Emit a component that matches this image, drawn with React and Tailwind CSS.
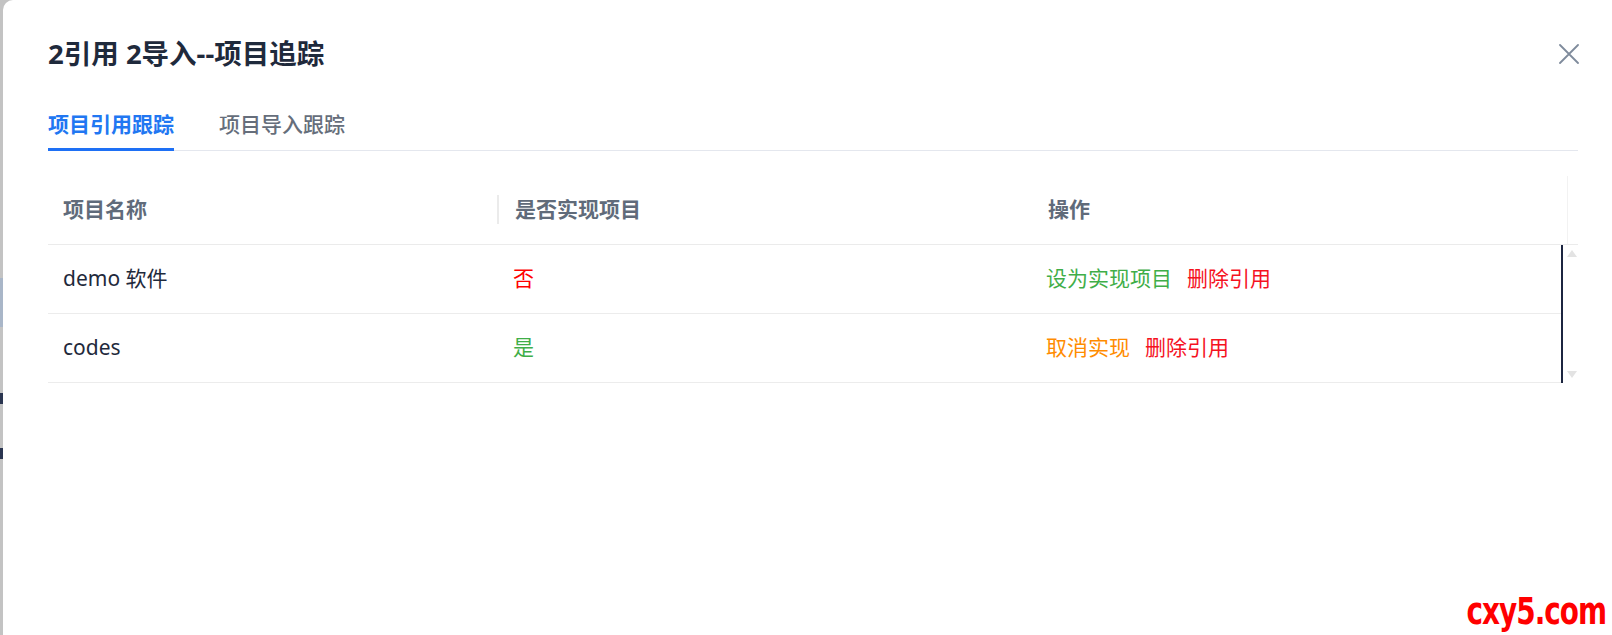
import React from 'react';

const rows = [
  { name: 'demo 软件', done: false },
  { name: 'codes', done: true },
];

const CloseIcon = () => (
  <svg width="20" height="20" viewBox="0 0 20 20" fill="none">
    <path d="M1 1L19 19M19 1L1 19" stroke="#7f8b9c" strokeWidth="1.8" strokeLinecap="round" />
  </svg>
);

const App = () => {
  return (
    <div
      className="flex h-[635px] w-full overflow-hidden bg-[#c3c3c3]"
      style={{ fontFamily: '"Noto Sans", "Noto Sans CJK SC", sans-serif' }}
    >
      {/* page behind the modal, only a sliver shows */}
      <div className="relative w-[3px] shrink-0">
        <div className="absolute left-0 top-[278px] h-[49px] w-[3px] bg-[#a9b6c8]" />
        <div className="absolute left-0 top-[393px] h-[11px] w-[3px] bg-[#2a3550]" />
        <div className="absolute left-0 top-[448px] h-[11px] w-[3px] bg-[#2a3550]" />
      </div>

      {/* modal */}
      <div className="relative flex flex-1 flex-col rounded-tl-[10px] bg-white pl-[45px] pr-[34px]">
        <div className="flex h-[109px] items-center justify-between pb-[1px]">
          <h1 className="text-[27.5px] font-bold text-[#1f2a3c]">2引用 2导入--项目追踪</h1>
          <button className="-mr-[1px] flex h-[20px] w-[20px] items-center justify-center">
            <CloseIcon />
          </button>
        </div>

        {/* tabs */}
        <div className="flex gap-[45px] border-b border-[#e4e7ee]">
          <div className="relative pb-[9px] text-[21px] font-semibold text-[#2177f2]">
            项目引用跟踪
            <div className="absolute bottom-[-1px] left-0 h-[3px] w-full bg-[#1e70f5]" />
          </div>
          <div className="pb-[9px] text-[21px] font-medium text-[#666e7b]">项目导入跟踪</div>
        </div>

        {/* table */}
        <div className="mt-[25px]">
          <div className="grid h-[69px] grid-cols-[451px_533px_1fr_11px] border-b border-[#ebebeb] text-[21px] font-semibold text-[#606b7a]">
            <div className="relative flex items-center pl-[15px]">
              项目名称
              <div className="absolute right-0 top-[19px] h-[29px] w-[2px] bg-[#ebebeb]" />
            </div>
            <div className="flex items-center pl-[16px]">是否实现项目</div>
            <div className="flex items-center pl-[16px]">操作</div>
            <div className="border-l border-[#f2f2f2]" />
          </div>

          <div className="flex">
            <div className="flex-1">
              {rows.map((r) => (
                <div
                  key={r.name}
                  className="grid h-[69px] grid-cols-[451px_533px_1fr] border-b border-[#ececec] text-[21px]"
                >
                  <div className="flex items-center pl-[15px] text-[#1f2a3c]">{r.name}</div>
                  <div className={`flex items-center pl-[14px] ${r.done ? 'text-[#3fae48]' : 'text-[#ff0000]'}`}>
                    {r.done ? '是' : '否'}
                  </div>
                  <div className="flex items-center gap-[15px] pl-[14px]">
                    {r.done ? (
                      <span className="text-[#ff8c00]">取消实现</span>
                    ) : (
                      <span className="text-[#3fae48]">设为实现项目</span>
                    )}
                    <span className="text-[#f5121f]">删除引用</span>
                  </div>
                </div>
              ))}
            </div>
            {/* scrollbar */}
            <div className="flex w-[17px] flex-col items-center justify-between border-l-2 border-[#1c2540] py-[5px] pl-[3px]">
              <svg width="10" height="7" viewBox="0 0 10 7">
                <path d="M5 0L10 7H0Z" fill="#e3e3e3" />
              </svg>
              <svg width="10" height="7" viewBox="0 0 10 7">
                <path d="M0 0H10L5 7Z" fill="#e3e3e3" />
              </svg>
            </div>
          </div>
        </div>

        <div
          className="absolute bottom-[5px] right-[6px] origin-bottom scale-y-[1.2] text-[31px] font-bold leading-none tracking-[-1px] text-[#ff0000]"
          style={{ fontFamily: '"DejaVu Sans Condensed", "Liberation Sans", sans-serif' }}
        >
          cxy5.com
        </div>
      </div>
    </div>
  );
};

export default App;
